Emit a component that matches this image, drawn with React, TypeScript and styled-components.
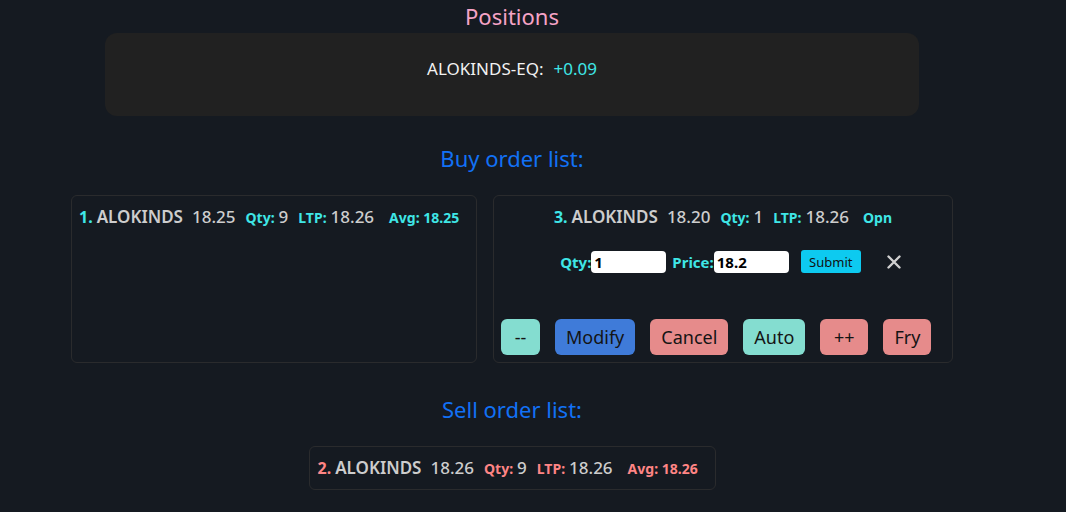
import styled, { createGlobalStyle } from 'styled-components';

interface ToneProps {
  tone: 'buy' | 'sell';
}

interface BtnProps {
  variant: 'teal' | 'blue' | 'red';
  minW?: number;
}

const GlobalStyle = createGlobalStyle`
  * {
    box-sizing: border-box;
  }
  body {
    margin: 0;
    background-color: #151a21;
    font-family: 'Noto Sans', 'Open Sans', sans-serif;
    color: #d2d2d2;
  }
`;

const Wrapper = styled.div`
  width: 1024px;
  min-height: 512px;
  display: flex;
  flex-direction: column;
  align-items: center;
`;

const PageTitle = styled.h2`
  margin: 1px 0 0;
  font-size: 22px;
  font-weight: 400;
  line-height: 30px;
  color: #f5a3c6;
`;

const PositionsCard = styled.div`
  width: 814px;
  height: 83px;
  margin-top: 2px;
  padding-bottom: 12px;
  background-color: #212121;
  border-radius: 12px;
  display: flex;
  align-items: center;
  justify-content: center;
  font-size: 17px;
  color: #f2f2f2;

  span {
    color: #3fe6e6;
    margin-left: 10px;
  }
`;

const SectionTitle = styled.h3`
  margin: 27px 0 0;
  font-size: 22px;
  font-weight: 400;
  line-height: 30px;
  color: #1271f5;
`;

const OrdersRow = styled.div`
  display: flex;
  gap: 16px;
  margin-top: 22px;
`;

const OrderCard = styled.div<{ w: number }>`
  width: ${p => p.w}px;
  height: 168px;
  border: 1px solid #2a2b2d;
  border-radius: 6px;
  padding: 9px 7px 7px;
  display: flex;
  flex-direction: column;
`;

const OrderLine = styled.div<{ center?: boolean }>`
  display: flex;
  align-items: baseline;
  justify-content: ${p => (p.center ? 'center' : 'flex-start')};
  line-height: 24px;
  font-size: 17px;
  font-weight: 600;
  color: #cdcdcd;
  white-space: nowrap;
`;

const Num = styled.span<ToneProps>`
  color: ${p => (p.tone === 'buy' ? '#3fe6e6' : '#ff8585')};
  font-size: 16px;
  font-weight: 700;
  margin-right: 4px;
`;

const Price = styled.span`
  margin-left: 9px;
  font-weight: 500;
`;

const Label = styled.span<ToneProps>`
  color: ${p => (p.tone === 'buy' ? '#3fe6e6' : '#ff8585')};
  font-size: 14px;
  font-weight: 700;
  margin-left: 10px;
  margin-right: 4px;
`;

const Value = styled.span`
  font-weight: 500;
`;

const Status = styled.span`
  color: #3fe6e6;
  font-size: 14px;
  font-weight: 700;
  margin-left: 14px;
`;

const EditRow = styled.div`
  display: flex;
  align-items: center;
  justify-content: center;
  margin-top: 20px;
  padding-left: 12px;
`;

const EditLabel = styled.label`
  color: #3fe6e6;
  font-size: 15px;
  font-weight: 700;
  margin-left: 6px;
`;

const EditInput = styled.input`
  width: 75px;
  height: 22px;
  border: none;
  border-radius: 4px;
  background: #ffffff;
  padding: 0 3px;
  font-family: inherit;
  font-size: 15px;
  font-weight: 700;
  color: #000;
  outline: none;
`;

const SubmitBtn = styled.button`
  margin-left: 12px;
  height: 23px;
  width: 60px;
  padding: 0;
  border: none;
  border-radius: 3px;
  background-color: #0dcaf0;
  color: #111;
  font-family: inherit;
  font-size: 13px;
`;

const CloseBtn = styled.button`
  margin-left: 23px;
  width: 20px;
  height: 20px;
  padding: 0;
  border: none;
  background: none;
  display: flex;
  align-items: center;
  justify-content: center;
`;

const ActionRow = styled.div`
  display: flex;
  gap: 15px;
  margin-top: auto;
`;

const colors = {
  teal: '#84ddd0',
  blue: '#3f7bd9',
  red: '#e68b8b',
};

const ActionBtn = styled.button<BtnProps>`
  height: 36px;
  min-width: ${p => p.minW ?? 0}px;
  padding: 0 11px;
  border: none;
  border-radius: 6px;
  background-color: ${p => colors[p.variant]};
  color: #141414;
  font-family: inherit;
  font-size: 18px;
`;

const SellCard = styled.div`
  width: 407px;
  height: 44px;
  margin-top: 22px;
  border: 1px solid #2a2b2d;
  border-radius: 6px;
  padding: 0 8px;
  display: flex;
  align-items: center;
`;

const App = () => {
  return (
    <Wrapper>
      <GlobalStyle />
      <PageTitle>Positions</PageTitle>
      <PositionsCard>
        ALOKINDS-EQ:<span>+0.09</span>
      </PositionsCard>

      <SectionTitle>Buy order list:</SectionTitle>
      <OrdersRow>
        <OrderCard w={406}>
          <OrderLine>
            <Num tone="buy">1.</Num>ALOKINDS<Price>18.25</Price>
            <Label tone="buy">Qty:</Label>
            <Value>9</Value>
            <Label tone="buy">LTP:</Label>
            <Value>18.26</Value>
            <Label tone="buy" style={{ marginLeft: 15 }}>
              Avg: 18.25
            </Label>
          </OrderLine>
        </OrderCard>
        <OrderCard w={460}>
          <OrderLine center>
            <Num tone="buy">3.</Num>ALOKINDS<Price>18.20</Price>
            <Label tone="buy">Qty:</Label>
            <Value>1</Value>
            <Label tone="buy">LTP:</Label>
            <Value>18.26</Value>
            <Status>Opn</Status>
          </OrderLine>
          <EditRow>
            <EditLabel>Qty:</EditLabel>
            <EditInput defaultValue="1" />
            <EditLabel>Price:</EditLabel>
            <EditInput defaultValue="18.2" />
            <SubmitBtn>Submit</SubmitBtn>
            <CloseBtn aria-label="close">
              <svg width="14" height="14" viewBox="0 0 14 14">
                <path
                  d="M1.5 1.5 L12.5 12.5 M12.5 1.5 L1.5 12.5"
                  stroke="#d0d0d0"
                  strokeWidth="2.4"
                  strokeLinecap="round"
                />
              </svg>
            </CloseBtn>
          </EditRow>
          <ActionRow>
            <ActionBtn variant="teal" minW={39}>
              --
            </ActionBtn>
            <ActionBtn variant="blue" minW={80}>
              Modify
            </ActionBtn>
            <ActionBtn variant="red">Cancel</ActionBtn>
            <ActionBtn variant="teal">Auto</ActionBtn>
            <ActionBtn variant="red" minW={48}>
              ++
            </ActionBtn>
            <ActionBtn variant="red" minW={48}>
              Fry
            </ActionBtn>
          </ActionRow>
        </OrderCard>
      </OrdersRow>

      <SectionTitle style={{ marginTop: 31 }}>Sell order list:</SectionTitle>
      <SellCard>
        <OrderLine>
          <Num tone="sell">2.</Num>ALOKINDS<Price>18.26</Price>
          <Label tone="sell">Qty:</Label>
          <Value>9</Value>
          <Label tone="sell">LTP:</Label>
          <Value>18.26</Value>
          <Label tone="sell" style={{ marginLeft: 15 }}>
            Avg: 18.26
          </Label>
        </OrderLine>
      </SellCard>
    </Wrapper>
  );
};

export default App;
